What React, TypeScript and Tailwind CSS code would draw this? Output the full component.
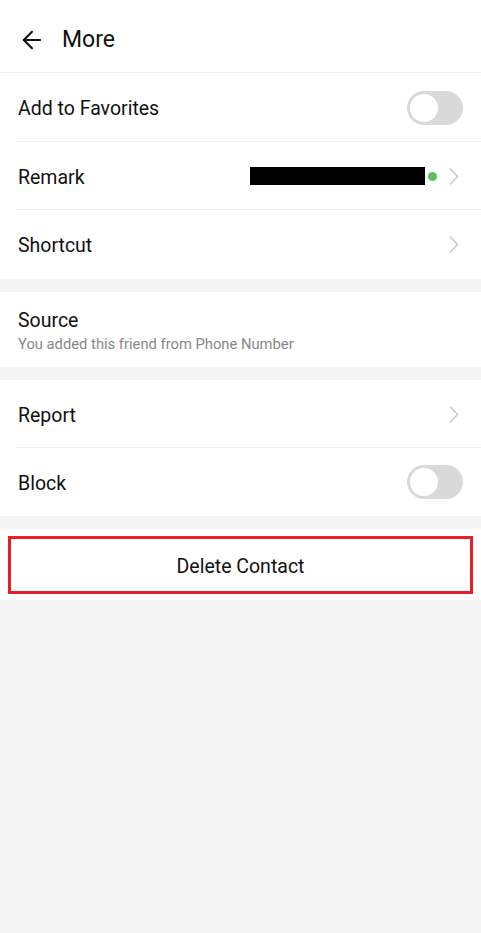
import { ArrowLeft } from 'lucide-react';

function Toggle() {
  return (
    <div className="w-[56px] h-[34px] rounded-full bg-[#d9d9d9] flex items-center px-[3px]">
      <div className="w-[28px] h-[28px] rounded-full bg-white" />
    </div>
  );
}

function Chevron() {
  return (
    <svg width="10" height="17" viewBox="0 0 10 17" fill="none" className="mr-[4px]">
      <polyline points="1.5,1 8.5,8.5 1.5,16" stroke="#c9c9c9" strokeWidth="1.5" strokeLinecap="round" strokeLinejoin="round" />
    </svg>
  );
}

function Row({ label, right, divider, h = 'h-[68px]' }: { label: string; right?: React.ReactNode; divider?: boolean; h?: string }) {
  return (
    <div className={`relative ${h} flex items-center justify-between pl-[18px] pr-[18px]`}>
      <span className="text-[19.5px] text-[#111] pt-[3px]">{label}</span>
      {right}
      {divider && <div className="absolute left-[16px] right-0 bottom-0 h-px bg-[#f0f0f0]" />}
    </div>
  );
}

export default function App() {
  return (
    <div className="min-h-[933px] bg-[#f4f4f4] font-['Roboto',sans-serif]">
      <div className="bg-white">
        <div className="relative h-[73px] flex items-center gap-[16px] px-[18px] pt-[7px]">
          <ArrowLeft size={28} strokeWidth={1.75} className="text-[#111]" />
          <span className="text-[23px] text-[#111]">More</span>
          <div className="absolute left-0 right-0 bottom-0 h-px bg-[#f0f0f0]" />
        </div>
        <Row label="Add to Favorites" h="h-[69px]" right={<Toggle />} divider />
        <Row
          label="Remark"
          divider
          right={
            <div className="flex items-center">
              <div className="w-[175px] h-[18px] bg-black" />
              <div className="w-[9px] h-[9px] rounded-full bg-[#5cc15a] ml-[3px]" />
              <div className="ml-[12px]"><Chevron /></div>
            </div>
          }
        />
        <Row label="Shortcut" h="h-[69px]" right={<Chevron />} />
      </div>

      <div className="mt-[13px] bg-white h-[75px] flex flex-col justify-center px-[18px] pt-[5px]">
        <span className="text-[19.5px] text-[#111] leading-[24px]">Source</span>
        <span className="text-[14.75px] text-[#888] leading-[21px] mt-[1px]">You added this friend from Phone Number</span>
      </div>

      <div className="mt-[13px] bg-white">
        <Row label="Report" right={<Chevron />} divider />
        <Row label="Block" right={<Toggle />} />
      </div>

      <div className="mt-[13px] bg-white pt-[7px] pb-[6px] px-[8px]">
        <div className="h-[58px] border-[3px] border-[#ec1c24] flex items-center justify-center pt-[3px]">
          <span className="text-[19.5px] text-[#111]">Delete Contact</span>
        </div>
      </div>
    </div>
  );
}
